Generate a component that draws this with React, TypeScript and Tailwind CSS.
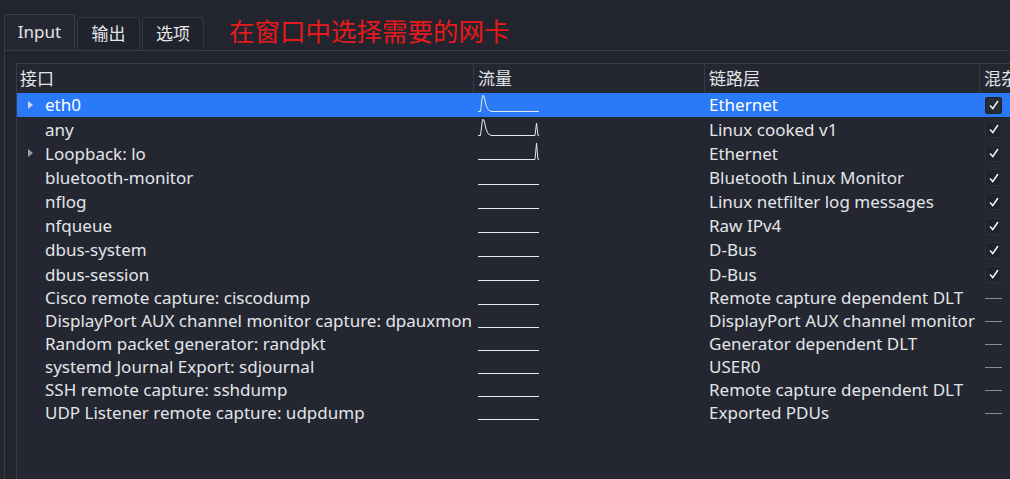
import React from 'react'

type Row = {
  name: string
  link: string
  arrow?: boolean
  spark: 'first' | 'both' | 'last' | 'flat'
  check: boolean
  selected?: boolean
}

const rows: Row[] = [
  { name: 'eth0', link: 'Ethernet', arrow: true, spark: 'first', check: true, selected: true },
  { name: 'any', link: 'Linux cooked v1', spark: 'both', check: true },
  { name: 'Loopback: lo', link: 'Ethernet', arrow: true, spark: 'last', check: true },
  { name: 'bluetooth-monitor', link: 'Bluetooth Linux Monitor', spark: 'flat', check: true },
  { name: 'nflog', link: 'Linux netfilter log messages', spark: 'flat', check: true },
  { name: 'nfqueue', link: 'Raw IPv4', spark: 'flat', check: true },
  { name: 'dbus-system', link: 'D-Bus', spark: 'flat', check: true },
  { name: 'dbus-session', link: 'D-Bus', spark: 'flat', check: true },
  { name: 'Cisco remote capture: ciscodump', link: 'Remote capture dependent DLT', spark: 'flat', check: false },
  { name: 'DisplayPort AUX channel monitor capture: dpauxmon', link: 'DisplayPort AUX channel monitor', spark: 'flat', check: false },
  { name: 'Random packet generator: randpkt', link: 'Generator dependent DLT', spark: 'flat', check: false },
  { name: 'systemd Journal Export: sdjournal', link: 'USER0', spark: 'flat', check: false },
  { name: 'SSH remote capture: sshdump', link: 'Remote capture dependent DLT', spark: 'flat', check: false },
  { name: 'UDP Listener remote capture: udpdump', link: 'Exported PDUs', spark: 'flat', check: false },
]

// traffic sparklines, baseline near the row bottom
const sparkPaths: Record<Row['spark'], string> = {
  first: 'M1 18.5 L3.5 18.5 L5.5 2.5 L7 3 L9 12 L11 16.5 L14 18.5 L62 18.5',
  both: 'M1 18.5 L3.5 18.5 L5.5 2.5 L7 3 L9 12 L11 16.5 L14 18.5 L58 18.5 L59.5 6 L61 18.5 L62 18.5',
  last: 'M1 18.5 L58 18.5 L59.5 2 L61 18.5 L62 18.5',
  flat: 'M1 18.5 L62 18.5',
}

function Spark({ kind }: { kind: Row['spark'] }) {
  return (
    <svg width="64" height="24" viewBox="0 0 64 24" className="block">
      <path d={sparkPaths[kind]} fill="none" stroke="#e6e8ec" strokeWidth="1" />
    </svg>
  )
}

function Check({ selected }: { selected?: boolean }) {
  return (
    <div className={`w-[17px] h-[17px] rounded-[2px] border flex items-center justify-center ${selected ? 'bg-[#272b36] border-[#1d2028]' : 'bg-[#20232b] border-[#2e313a]'}`}>
      <svg width="12" height="12" viewBox="0 0 12 12">
        <path d="M2 6.5 L4.8 9.5 L10 2" fill="none" stroke="#f2f3f5" strokeWidth="1.5" />
      </svg>
    </div>
  )
}

export default function App() {
  return (
    <div className="w-[1010px] h-[479px] overflow-hidden bg-[#22252e] text-[#e3e5e8] font-['Noto_Sans','Noto_Sans_CJK_SC',sans-serif] text-[17px]">
      {/* tab bar */}
      <div className="flex items-end h-[50px] pl-[4px]">
        <div className="h-[36px] w-[71px] rounded-t-[3px] border border-b-0 border-[#3a3e48] bg-[#252832] flex items-center justify-center text-[17px] pb-[2px]">
          Input
        </div>
        <div className="h-[32px] w-[63px] ml-[2px] mb-[1px] rounded-t-[3px] border border-b-0 border-[#353842] bg-[#20232b] flex items-center justify-center text-[17px]">
          输出
        </div>
        <div className="h-[32px] w-[62px] ml-[2px] mb-[1px] rounded-t-[3px] border border-b-0 border-[#353842] bg-[#20232b] flex items-center justify-center text-[17px]">
          选项
        </div>
        <div className="self-start mt-[13px] ml-[25px] text-[25.5px] leading-[34px] text-[#e8191c] font-['Noto_Sans_CJK_SC',sans-serif]">
          在窗口中选择需要的网卡
        </div>
      </div>

      {/* pane */}
      <div className="ml-[4px] border-l border-t border-[#393c46] h-[429px] pl-[11px] pt-[12px]">
        <div className="border-l border-t border-[#3a3d47] h-full bg-[#242731]">
          {/* header */}
          <div className="flex h-[29px] items-center">
            <div className="w-[457px] pl-[3px] h-full flex items-center border-r border-[#363943]">接口</div>
            <div className="w-[231px] pl-[4px] h-full flex items-center border-r border-[#363943]">流量</div>
            <div className="w-[275px] pl-[4px] h-full flex items-center border-r border-[#363943]">链路层</div>
            <div className="flex-1 pl-[4px] h-full flex items-center whitespace-nowrap overflow-hidden">混杂</div>
          </div>
          {rows.map((r, i) => (
            <div
              key={i}
              className={`flex items-center ${r.check ? 'h-[24.2px]' : 'h-[23px]'} ${r.selected ? 'bg-[#2a7af7] text-white' : ''}`}
            >
              <div className="w-[457px] flex items-center h-full whitespace-nowrap overflow-hidden">
                <div className="w-[28px] flex items-center justify-end pr-[12px]">
                  {r.arrow && (
                    <svg width="5" height="8" viewBox="0 0 5 8">
                      <path d="M0 0 L5 4 L0 8 Z" fill={r.selected ? '#c9d6ee' : '#9a9da6'} />
                    </svg>
                  )}
                </div>
                <span>{r.name}</span>
              </div>
              <div className="w-[231px] h-full flex items-center pl-[3px]">
                <Spark kind={r.spark} />
              </div>
              <div className="w-[275px] h-full flex items-center pl-[4px] whitespace-nowrap overflow-hidden">{r.link}</div>
              <div className="flex-1 h-full flex items-center pl-[5px]">
                {r.check ? <Check selected={r.selected} /> : <div className="w-[17px] h-[1px] bg-[#8a8d96]" />}
              </div>
            </div>
          ))}
        </div>
      </div>
    </div>
  )
}
